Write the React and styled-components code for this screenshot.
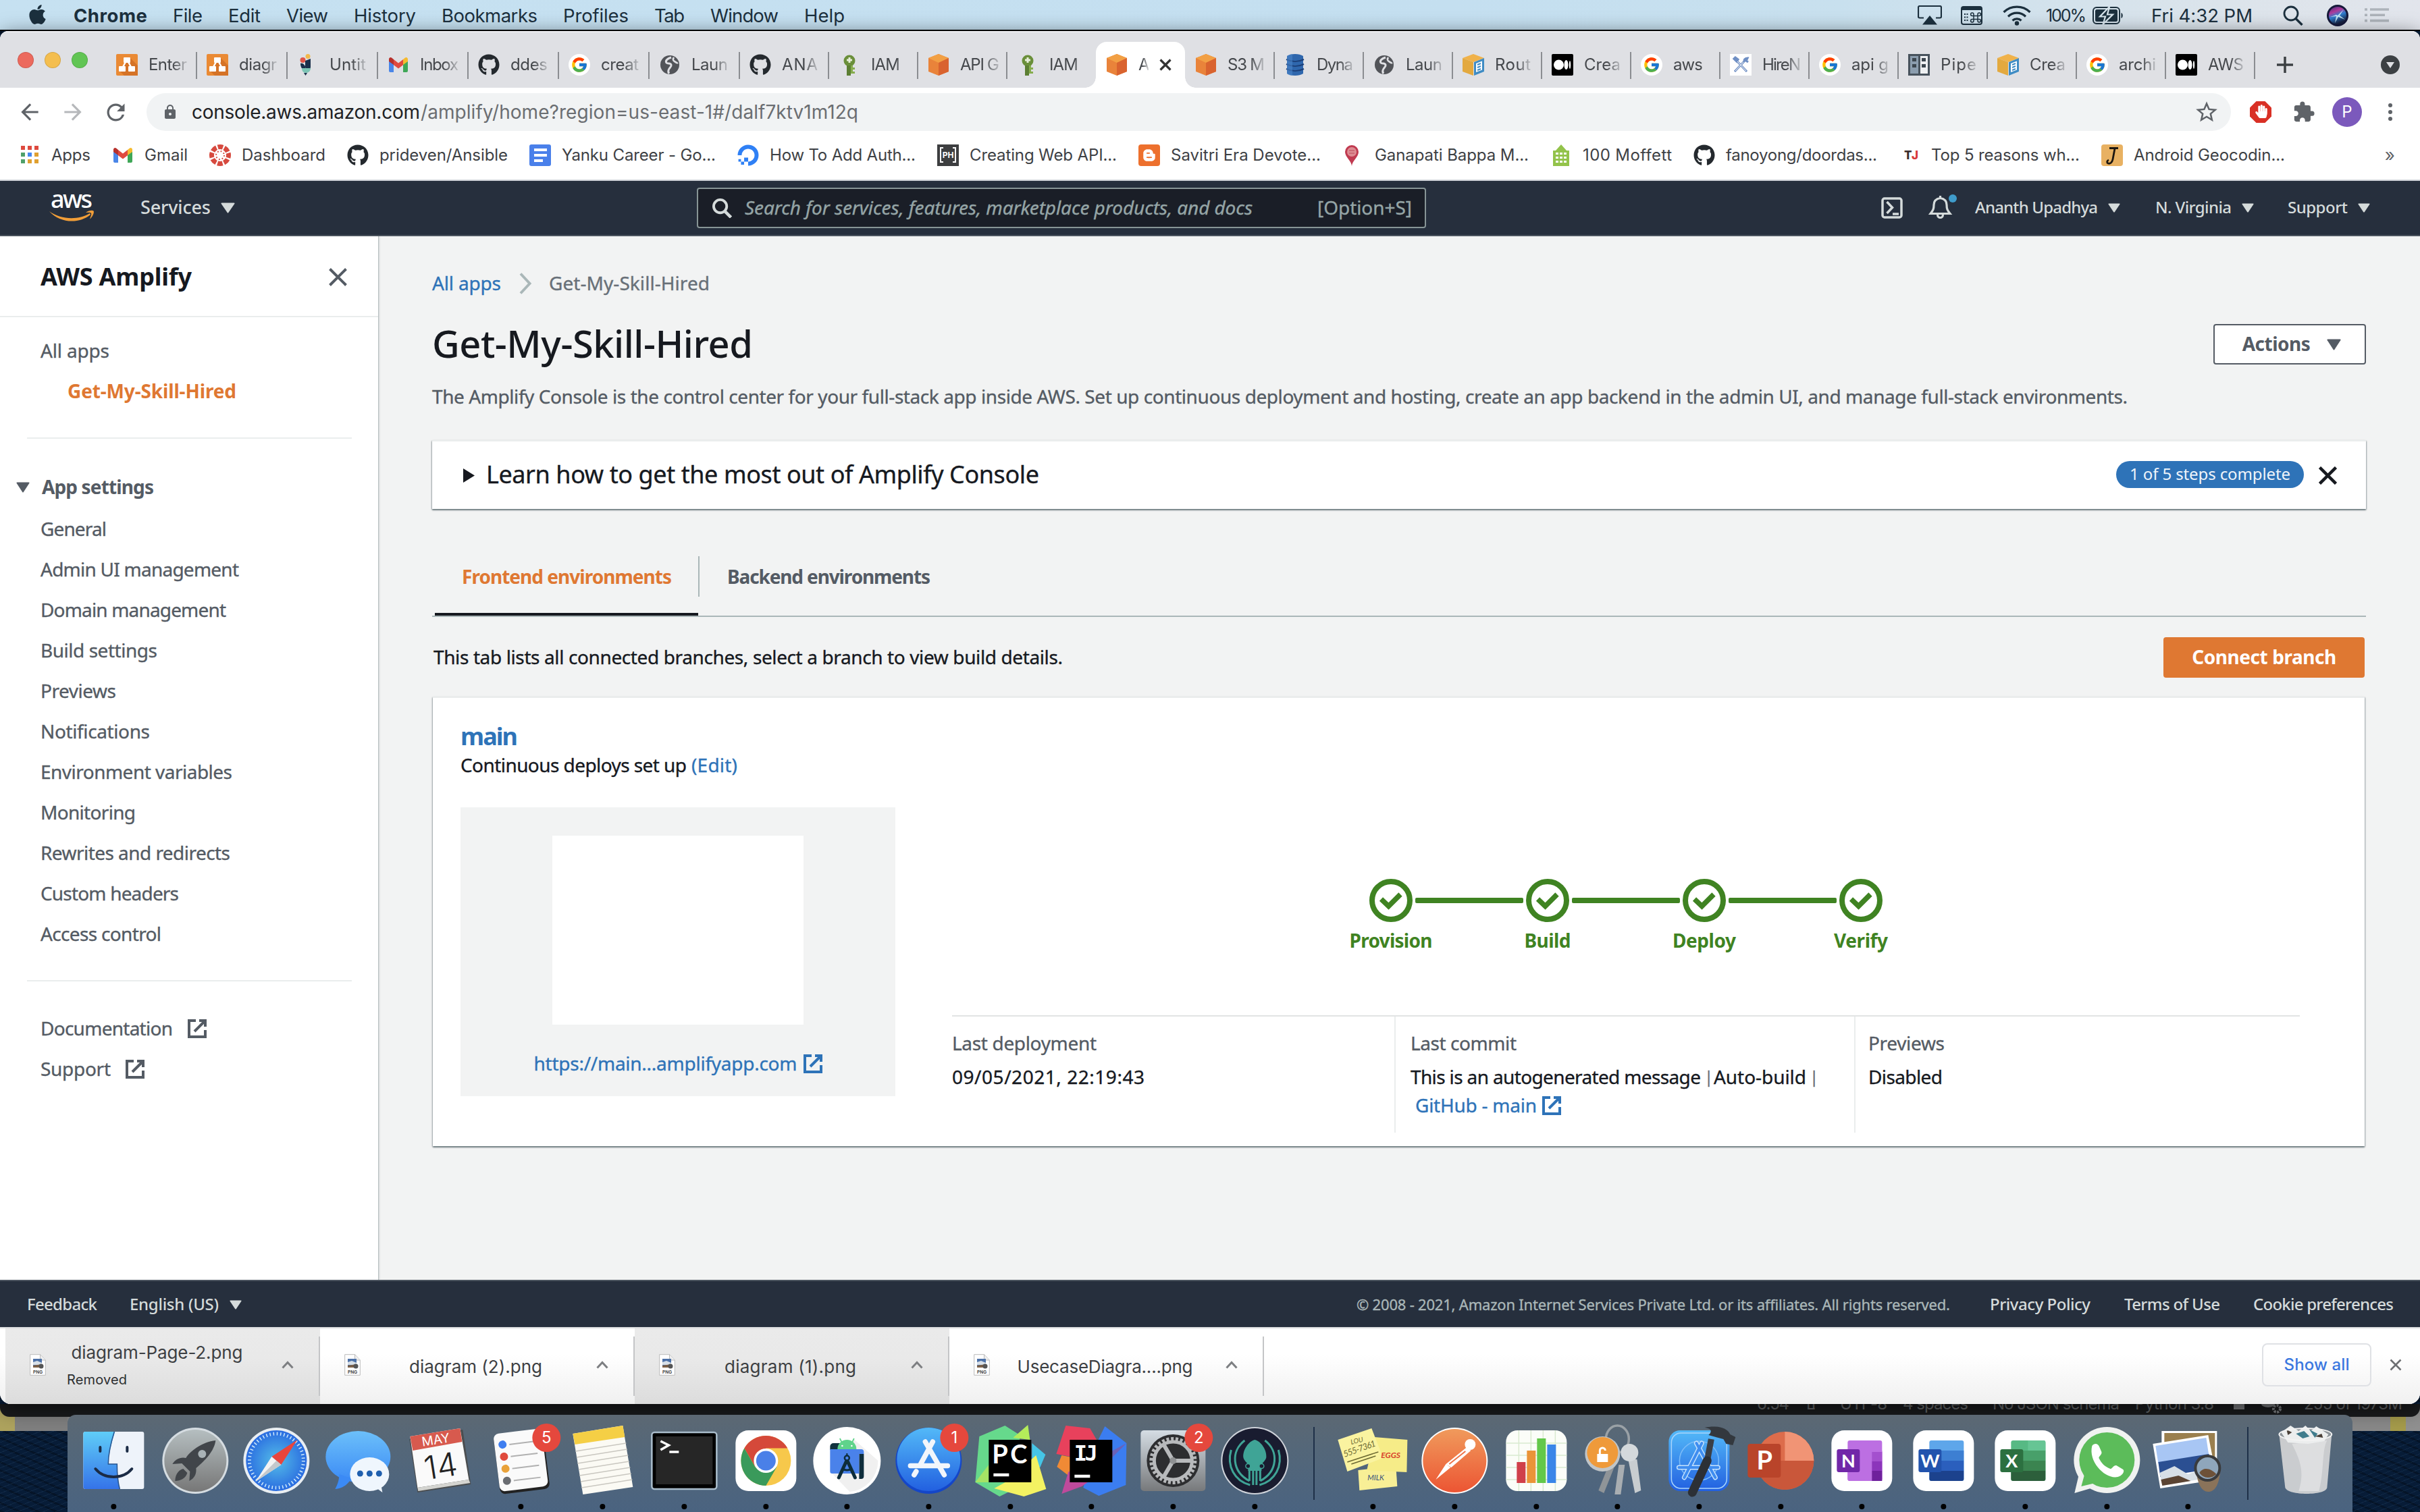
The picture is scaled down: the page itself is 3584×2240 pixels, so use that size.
import React, { useLayoutEffect, useRef } from "react";
import styled, { createGlobalStyle, css } from "styled-components";
import { FaApple, FaGithub, FaDigitalOcean, FaBloggerB, FaHandPaper } from "react-icons/fa";
import { FcGoogle } from "react-icons/fc";
import { MdExtension, MdStarBorder, MdLock, MdRefresh, MdArrowBack, MdArrowForward } from "react-icons/md";

const ember = `"Noto Sans", "Open Sans", sans-serif`;
const system = `Inter, Roboto, sans-serif`;

const GlobalStyle = createGlobalStyle`
  * { box-sizing: border-box; }
  html, body { margin: 0; padding: 0; }
  body { width: 3584px; height: 2240px; overflow: hidden; background: #06192f; font-family: ${ember}; }
  svg { display: block; flex: none; }
`;

/* ---------- text ---------- */

const Label = styled.span`
  display: inline-block;
  flex: none;
  white-space: pre;
  font-family: ${(p) => (p.$ui ? system : ember)};
  font-size: ${(p) => p.$size || 28}px;
  font-weight: ${(p) => p.$weight || 400};
  font-style: ${(p) => (p.$italic ? "italic" : "normal")};
  color: ${(p) => p.$color || "inherit"};
  line-height: ${(p) => p.$line || 40}px;
  margin-bottom: ${(p) => (p.$ui ? 0 : 2)}px;
  -webkit-text-stroke: ${(p) => (p.$ui || p.$weight || p.$thin ? 0 : 0.35)}px currentColor;
`;

/* Spreads its letters so that the run takes exactly w pixels. */
function Text({ w, children, ui, size, weight, italic, color, line, thin }) {
  const ref = useRef(null);
  useLayoutEffect(() => {
    const el = ref.current;
    if (!w) return;
    el.style.letterSpacing = "0px";
    el.style.width = "auto";
    const natural = el.getBoundingClientRect().width;
    const count = el.textContent.length;
    el.style.letterSpacing = `${(w - natural) / Math.max(1, count - 1)}px`;
    el.style.width = `${w}px`;
  }, [w, children]);
  return (
    <Label ref={ref} $ui={ui} $size={size} $weight={weight} $italic={italic} $color={color} $line={line} $thin={thin}>
      {children}
    </Label>
  );
}

/* ---------- desktop ---------- */

const Desktop = styled.div`
  position: relative;
  width: 3584px;
  height: 2240px;
  overflow: hidden;
  display: flex;
  flex-direction: column;
  background:
    repeating-linear-gradient(158deg, rgba(70, 110, 150, 0.16) 0 1px, transparent 1px 7px),
    repeating-linear-gradient(24deg, rgba(0, 0, 0, 0.28) 0 3px, transparent 3px 11px),
    #071c37;
`;

const MenuBar = styled.header`
  height: 46px;
  flex: none;
  display: flex;
  align-items: center;
  padding: 1px 46px 0 42px;
  border-bottom: 2px solid #000;
  background: linear-gradient(90deg, #c6e1f1 0, #c4dff0 60%, #c8e0ee 76%, #dce4eb 92%, #e2e5ec 100%);
  color: #1c303e;
`;
const AppleMark = styled(FaApple)`
  margin: 0 -4px 3px -3px;
`;
const MenuItems = styled.nav`
  display: flex;
  gap: 38px;
  margin-left: 41px;
`;
const MenuStatus = styled.div`
  display: flex;
  align-items: center;
  margin-left: auto;
`;
const Gap = styled.i`
  flex: none;
  width: ${(p) => p.$w}px;
`;

const BrowserWindow = styled.div`
  height: 2034px;
  flex: none;
  display: flex;
  flex-direction: column;
  overflow: hidden;
  border-radius: 12px 12px 16px 16px;
  background: #fff;
  position: relative;
  z-index: 1;
  box-shadow: 0 6px 30px rgba(0, 0, 0, 0.6);
`;

/* ---------- tab strip ---------- */

const TabStrip = styled.div`
  height: 84px;
  flex: none;
  display: flex;
  background: #dfe0e4;
  border-top: 2px solid #ededf0;
  padding-top: 14px;
`;
const TrafficLights = styled.div`
  display: flex;
  gap: 16px;
  width: 157px;
  padding: 15px 0 0 26px;
`;
const Light = styled.i`
  width: 24px;
  height: 24px;
  border-radius: 50%;
  background: ${(p) => p.$c};
  border: 1px solid rgba(0, 0, 0, 0.12);
`;
const Tab = styled.div`
  width: ${(p) => p.$w}px;
  height: 68px;
  flex: none;
  display: flex;
  align-items: center;
  gap: 16px;
  padding-left: 15px;
  position: relative;
  color: #45484c;
  ${(p) =>
    p.$active
      ? css`
          background: #fff;
          border-radius: 16px 16px 0 0;
          &::before,
          &::after {
            content: "";
            position: absolute;
            bottom: 0;
            width: 16px;
            height: 16px;
          }
          &::before {
            left: -16px;
            background: radial-gradient(circle at 0 0, transparent 15.5px, #fff 16px);
          }
          &::after {
            right: -16px;
            background: radial-gradient(circle at 100% 0, transparent 15.5px, #fff 16px);
          }
        `
      : ""}
`;
const TabTitle = styled.span`
  flex: none;
  mask-image: linear-gradient(90deg, #000 0, #000 ${(p) => p.$fade}%, rgba(0, 0, 0, 0.2) 100%);
`;
const TabDivider = styled.i`
  position: absolute;
  right: -1px;
  top: 15px;
  width: 2px;
  height: 40px;
  background: #8b8d91;
`;
const StripEnd = styled.div`
  display: flex;
  flex: 1;
  align-items: center;
  justify-content: space-between;
  padding: 0 30px 0 32px;
`;

/* ---------- toolbar ---------- */

const Toolbar = styled.div`
  height: 72px;
  flex: none;
  display: flex;
  align-items: center;
  padding: 0 28px 0 25px;
  color: #5f6368;
`;
const Omnibox = styled.div`
  width: 3087px;
  height: 56px;
  border-radius: 28px;
  background: #f1f3f4;
  display: flex;
  align-items: center;
  padding: 0 17px 0 23px;
  margin-left: 26px;
`;
const Push = styled.i`
  margin-left: auto;
`;
const Avatar = styled.span`
  width: 44px;
  height: 44px;
  border-radius: 50%;
  background: #7b59bc;
  display: flex;
  align-items: center;
  justify-content: center;
`;
const Bookmarks = styled.div`
  height: 66px;
  flex: none;
  display: flex;
  align-items: flex-start;
  gap: 32px;
  padding: 8px 37px 0 28px;
  border-bottom: 2px solid #cfd2d8;
  color: #3e4145;
`;
const Bookmark = styled.a`
  display: flex;
  align-items: center;
  gap: 16px;
  height: 40px;
`;

/* ---------- AWS navigation ---------- */

const AwsNav = styled.div`
  height: 82px;
  flex: none;
  display: flex;
  align-items: center;
  padding: 0 74px 0 73px;
  background: #262f3d;
  border-bottom: 2px solid #4b545f;
  color: #d5dbdb;
`;
const AwsLogo = styled.div`
  display: flex;
  flex-direction: column;
  align-items: center;
  width: 66px;
`;
const SearchBox = styled.div`
  width: 1080px;
  height: 60px;
  margin-left: 684px;
  display: flex;
  align-items: center;
  border: 2px solid #879596;
  border-radius: 4px;
  background: #1a1e27;
  color: #95a5a6;
  padding: 0 19px 0 21px;
`;
const NavRight = styled.div`
  display: flex;
  align-items: center;
  margin-left: auto;
`;
const NavMenu = styled.span`
  display: flex;
  align-items: center;
  gap: ${(p) => p.$gap || 15}px;
`;

/* ---------- console ---------- */

const Console = styled.div`
  height: 1546px;
  flex: none;
  display: flex;
  background: #f2f3f3;
`;
const Sidebar = styled.aside`
  width: 561px;
  flex: none;
  background: #fff;
  border-right: 1px solid #b9c0c1;
  box-shadow: 1px 0 2px rgba(0, 28, 36, 0.15);
  color: #545b64;
`;
const SidebarHead = styled.div`
  height: 120px;
  display: flex;
  align-items: center;
  justify-content: space-between;
  padding: 3px 46px 0 60px;
  border-bottom: 2px solid #eaeded;
`;
const NavRow = styled.div`
  height: 60px;
  display: flex;
  align-items: center;
  gap: ${(p) => p.$gap || 22}px;
  padding-left: ${(p) => p.$indent || 60}px;
`;
const NavList = styled.div`
  padding-top: ${(p) => p.$top}px;
`;
const Rule = styled.hr`
  border: 0;
  height: 2px;
  margin: 38px 39px 0 40px;
  background: #eaeded;
`;

const Main = styled.main`
  flex: 1;
  padding: 50px 80px 0 79px;
  color: #16191f;
`;
const Crumbs = styled.div`
  display: flex;
  align-items: center;
  height: 40px;
`;
const TitleRow = styled.div`
  display: flex;
  align-items: center;
  justify-content: space-between;
  height: 72px;
  margin: 34px 0 22px;
`;
const Title = styled.h1`
  margin: 0 0 2px;
  height: 72px;
`;
const OutlineButton = styled.button`
  width: 226px;
  height: 60px;
  display: flex;
  align-items: center;
  justify-content: center;
  gap: 24px;
  padding: 0 0 0 5px;
  border: 2px solid #545b64;
  border-radius: 4px;
  background: #fff;
  color: #545b64;
`;
const panel = css`
  background: #fff;
  box-shadow:
    0 2px 2px 0 rgba(0, 28, 36, 0.4),
    1px 1px 2px 0 rgba(0, 28, 36, 0.22),
    -1px 1px 2px 0 rgba(0, 28, 36, 0.22);
  border-top: 2px solid #eaeded;
`;
const LearnPanel = styled.section`
  ${panel}
  height: 102px;
  margin-top: 44px;
  display: flex;
  align-items: center;
  padding: 0 43px 0 45px;
`;
const Badge = styled.span`
  width: 278px;
  height: 40px;
  border-radius: 20px;
  background: #2e73b8;
  display: flex;
  align-items: center;
  justify-content: center;
  margin: 0 0 3px auto;
`;
const Tabs = styled.div`
  height: 102px;
  margin-top: 58px;
  display: flex;
  border-bottom: 2px solid #aab7b8;
`;
const EnvTab = styled.div`
  height: 100px;
  padding: 22px ${(p) => p.$right || 0}px 0 ${(p) => p.$left}px;
  margin-left: ${(p) => p.$offset || 0}px;
  border-bottom: ${(p) => (p.$active ? "4px solid #16191f" : "0")};
`;
const TabSplit = styled.i`
  width: 2px;
  height: 60px;
  margin-top: 12px;
  background: #aab7b8;
`;
const ListHead = styled.div`
  display: flex;
  align-items: center;
  justify-content: space-between;
  height: 60px;
  margin: 30px 2px 28px;
`;
const PrimaryButton = styled.button`
  width: 298px;
  height: 60px;
  display: flex;
  align-items: center;
  justify-content: center;
  border: 0;
  border-radius: 4px;
  background: #df7832;
  padding: 0;
`;
const BranchCard = styled.section`
  ${panel}
  height: 666px;
  margin: 0 2px 0 1px;
  padding: 38px 0 0 41px;
`;
const Line = styled.div`
  height: 40px;
  display: flex;
  align-items: center;
  gap: ${(p) => p.$gap || 0}px;
  margin-top: ${(p) => p.$top || 0}px;
  padding-left: ${(p) => p.$indent || 0}px;
`;
const CardBody = styled.div`
  display: flex;
  gap: 84px;
  margin-top: 42px;
`;
const Preview = styled.div`
  width: 644px;
  height: 428px;
  padding-top: 42px;
  display: flex;
  flex-direction: column;
  align-items: center;
  background: #f2f3f3;
`;
const Shot = styled.div`
  width: 372px;
  height: 280px;
  background: #fff;
`;
const Details = styled.div`
  width: 1996px;
  padding-top: 106px;
`;
const Pipeline = styled.div`
  display: flex;
  align-items: center;
  justify-content: center;
`;
const Connector = styled.i`
  width: 160px;
  height: 8px;
  margin: 0 4px;
  border-radius: 2px;
  background: #3f8322;
`;
const StepLabels = styled.div`
  display: grid;
  grid-template-columns: repeat(4, 232px);
  grid-auto-rows: 40px;
  justify-content: center;
  justify-items: center;
  margin-top: 7px;
`;
const Facts = styled.div`
  display: grid;
  grid-template-columns: 655px 681px 1fr;
  height: 174px;
  margin-top: 91px;
  border-top: 2px solid #e1e4e4;
`;
const Fact = styled.div`
  padding: 20px 0 0 ${(p) => p.$left || 0}px;
  border-left: ${(p) => (p.$left ? "2px solid #eaeded" : "0")};
`;

/* ---------- footer and downloads ---------- */

const Footer = styled.footer`
  height: 70px;
  flex: none;
  display: flex;
  align-items: center;
  padding: 2px 39px 0 40px;
  background: #262f3d;
  border-top: 2px solid #4b545f;
  color: #d5dbdb;
`;
const Downloads = styled.div`
  height: 114px;
  flex: none;
  display: flex;
  border-top: 2px solid #dcdddf;
  padding-left: 8px;
  background: linear-gradient(180deg, #fff 0, #fff 35%, #f0f0f0 100%);
`;
const Download = styled.div`
  width: 466px;
  height: 112px;
  flex: none;
  display: flex;
  align-items: center;
  padding: 0 39px 4px 36px;
  position: relative;
  background: ${(p) => (p.$dim ? "linear-gradient(180deg, #eaeaea 0, #e9e9e9 40%, #dcdcdc 100%)" : "none")};
  &::after {
    content: "";
    position: absolute;
    right: 0;
    top: 12px;
    width: 2px;
    height: 88px;
    background: #c4c5c7;
  }
`;
const DownloadName = styled.div`
  flex: 1;
  display: flex;
  flex-direction: column;
  color: #3d4043;
  align-items: center;
  padding: ${(p) => (p.$note ? "3px 20px 0 0" : "6px 8px 0 0")};
`;
const RemovedNote = styled.div`
  align-self: flex-start;
  padding-left: 31px;
  color: #2d2f31;
`;
const DownloadActions = styled.div`
  display: flex;
  align-items: center;
  gap: 27px;
  margin-left: auto;
  padding: 0 27px 4px 0;
`;
const ShowAll = styled.button`
  width: 162px;
  height: 64px;
  padding: 0;
  border: 2px solid #dfe1e5;
  border-radius: 8px;
  background: transparent;
`;

/* ---------- background editor, dock ---------- */

const Behind = styled.div`
  flex: none;
  height: 40px;
  background: linear-gradient(90deg, #aea35e 0 22px, #7f7f7f 22px 100px, #888 100px 3540px, #a59b4b 3540px 3563px, #909090 3563px);
`;
const EditorBar = styled.div`
  height: 19px;
  overflow: hidden;
  border-radius: 0 0 14px 14px;
  background: #1a1b1d;
  color: #66686a;
  display: flex;
  justify-content: flex-end;
  padding-right: 26px;
`;
const EditorText = styled.div`
  display: flex;
  align-items: center;
  height: 40px;
  margin-top: -20px;
`;
const Dock = styled.div`
  position: absolute;
  z-index: 2;
  left: 100px;
  bottom: 0;
  width: 3384px;
  height: 144px;
  display: flex;
  padding-left: 8px;
  border-radius: 12px 12px 0 0;
  background: linear-gradient(180deg, #5c6873 0, #546779 35%, #4a6380 100%);
`;
const DockItem = styled.svg`
  width: 120.7px;
  height: 144px;
  overflow: visible;
`;
const DockSplit = styled.i`
  flex: none;
  width: 2px;
  height: 108px;
  margin: 18px ${(p) => p.$right || 26}px 0 27px;
  background: #1e3048;
`;

/* ---------- small icons ---------- */

const Caret = ({ s = 18, c = "#d5dbdb", h = 14 }) => (
  <svg width={s} height={h} viewBox="0 0 20 16" preserveAspectRatio="none">
    <path d="M1.5 .5h17a1 1 0 0 1 .8 1.5L10.8 15a1 1 0 0 1-1.6 0L.7 2A1 1 0 0 1 1.5 .5z" fill={c} />
  </svg>
);
const Cross = ({ s = 26, c = "#545b64", t = 4 }) => (
  <svg width={s} height={s} viewBox={`0 0 ${s} ${s}`}>
    <path d={`M1.5 1.5L${s - 1.5} ${s - 1.5}M${s - 1.5} 1.5L1.5 ${s - 1.5}`} stroke={c} strokeWidth={t} />
  </svg>
);
const External = ({ c = "#545b64" }) => (
  <svg width="28" height="28" viewBox="0 0 28 28" fill="none" stroke={c} strokeWidth="4">
    <path d="M12 2H2v24h24V16M17 2h9v9M26 2L10 18" />
  </svg>
);
const Github = () => <FaGithub size={32} color="#24292e" />;
const Ocean = () => <FaDigitalOcean size={32} color="#2f80f5" />;
const Google = () => (
  <svg width="32" height="32" viewBox="0 0 32 32">
    <circle cx="16" cy="16" r="16" fill="#fff" />
    <FcGoogle x="3" y="3" size={26} />
  </svg>
);
const Gmail = () => (
  <svg width="32" height="32" viewBox="0 0 32 32">
    <path d="M2 8v17a2 2 0 0 0 2 2h5V13z" fill="#4a86e8" />
    <path d="M30 8v17a2 2 0 0 1-2 2h-5V13z" fill="#3fa757" />
    <path d="M23 8l3-2.400a2.500 2.500 0 0 1 4 2V11l-7 5z" fill="#f6bb2f" />
    <path d="M9 8L6 5.600a2.500 2.500 0 0 0-4 2V11l7 5z" fill="#b7312c" />
    <path d="M9 8l7 5.500L23 8v8.200l-7 5.300-7-5.300z" fill="#e04a3f" />
  </svg>
);
const Drawio = () => (
  <svg width="32" height="32" viewBox="0 0 32 32">
    <rect width="32" height="32" rx="2" fill="#ea8a34" />
    <path d="M20 5l12 12v15H12L6 26z" fill="#d57327" />
    <path d="M16 8L8 23M16 8l8 15" stroke="#fff" strokeWidth="2.500" />
    <rect x="11" y="5" width="10" height="8" rx="1" fill="#fff" />
    <rect x="4" y="18" width="10" height="8" rx="1" fill="#fff" />
    <rect x="18" y="18" width="10" height="8" rx="1" fill="#fff" />
  </svg>
);
const Notebook = () => (
  <svg width="32" height="32" viewBox="0 0 32 32">
    <circle cx="16" cy="3.500" r="3.500" fill="#f2b84b" />
    <circle cx="8.500" cy="9" r="4" fill="#e05548" />
    <path d="M12 10l8-3v12a4 4 0 0 1-8 0zM5 14c2-1 5 0 7 4v6c-4 0-7-4-7-10z" fill="#1b2f4b" />
    <path d="M7 21h13c0 4-3 7-7 7s-6-3-6-7z" fill="#7cc4b4" />
    <path d="M10 28h5l-2.500 4z" fill="#1b2f4b" />
  </svg>
);
const Globe = () => (
  <svg width="32" height="32" viewBox="0 0 32 32">
    <circle cx="16" cy="16" r="14" fill="#525459" />
    <path d="M18 5c-6 2-9 5-7 8 2 2 6 0 7 3 1 3-3 4-4 8-.5 2 0 4 1 5" fill="none" stroke="#dfe0e4" strokeWidth="3" />
    <path d="M22 5c-2 3-1 5 1 6s3 3 5 2" fill="none" stroke="#dfe0e4" strokeWidth="2.600" />
  </svg>
);
const Key = () => (
  <svg width="32" height="32" viewBox="0 0 32 32">
    <circle cx="16" cy="10" r="8.500" fill="#6a8f3a" />
    <path d="M12 17h6v15h-6z" fill="#5c7f33" />
    <path d="M18 17h3v3h3v3h-3v3h3v3h-6z" fill="#86ad4e" />
    <path d="M12 9h8M16 5v8" stroke="#e6eed8" strokeWidth="3" />
  </svg>
);
const Cube = () => (
  <svg width="32" height="32" viewBox="0 0 32 32">
    <path d="M16 0l15 6v20l-15 6L1 26V6z" fill="#e9833a" />
    <path d="M16 0l15 6-15 7L1 6z" fill="#f2a044" />
    <path d="M16 13l15-7v20l-15 6z" fill="#d9632f" />
  </svg>
);
const Dynamo = () => (
  <svg width="32" height="32" viewBox="0 0 32 32">
    <path d="M4 3c6-4 18-4 24 0v26c-6 4-18 4-24 0z" fill="#2f67ad" />
    <path d="M3 8c8 4 18 4 26 0M3 15c8 4 18 4 26 0M3 22c8 4 18 4 26 0" stroke="#1b3f78" strokeWidth="2" fill="none" />
    <path d="M4 3c3-2 6-3 8-3v32c-3 0-6-1-8-3z" fill="#4a84c8" opacity=".6" />
  </svg>
);
const RouteCube = () => (
  <svg width="32" height="32" viewBox="0 0 32 32">
    <path d="M0 6l16-6 16 6-16 6z" fill="#f0b24a" />
    <path d="M0 6l16 6v20L0 26z" fill="#e3a93f" />
    <path d="M17 12l15-6v20l-15 6z" fill="#3f8cc4" />
    <path d="M20 14l9-3.500v13L20 27z" fill="#fff" />
    <path d="M22 16l5-2M22 20l5-2M22 24l5-2" stroke="#3f8cc4" strokeWidth="2" />
  </svg>
);
const Medium = () => (
  <svg width="32" height="32" viewBox="0 0 32 32">
    <rect width="32" height="32" rx="2" fill="#000" />
    <circle cx="10.500" cy="16" r="7.500" fill="#fff" />
    <ellipse cx="21.500" cy="16" rx="3" ry="7" fill="#fff" />
    <ellipse cx="27" cy="16" rx="1.200" ry="6" fill="#fff" />
  </svg>
);
const Tools = () => (
  <svg width="32" height="32" viewBox="0 0 32 32">
    <rect width="32" height="32" fill="#fff" />
    <path d="M9 9l16 17M7 26l14-15M22 12c-2-3 0-6 4-6l-2 4 3 2M6 7l4 4 2-3-4-3z" stroke="#6f8fc4" strokeWidth="3.200" fill="none" />
    <path d="M11 11l13 14M8 25l12-13" stroke="#fff" strokeWidth="1" />
  </svg>
);
const Building2 = () => (
  <svg width="32" height="32" viewBox="0 0 32 32">
    <rect width="32" height="32" fill="#47525c" />
    <rect x="3" y="3" width="12" height="26" fill="#8b9dae" />
    <rect x="18" y="3" width="11" height="26" fill="#eef0f2" />
    <path d="M6 6h6v5H6zM6 15h6v5H6zM20 6h6v5h-6zM20 15h6v5h-6z" fill="#3c464f" />
  </svg>
);
const AppsGrid = () => (
  <svg width="32" height="32" viewBox="0 0 32 32">
    {["#de4a3e", "#de4a3e", "#de4a3e", "#4fa06a", "#4688f1", "#e0a030", "#4fa06a", "#e0a030", "#e0a030"].map((c, i) => (
      <rect key={i} x={3 + (i % 3) * 10} y={2 + Math.floor(i / 3) * 10} width="6" height="6" fill={c} />
    ))}
  </svg>
);
const Canvas = () => (
  <svg width="32" height="32" viewBox="0 0 32 32">
    <circle cx="16" cy="16" r="12.500" fill="none" stroke="#d64a3f" strokeWidth="7" strokeDasharray="7.600 2.217" strokeDashoffset="3.800" />
    <circle cx="16" cy="16" r="6" fill="none" stroke="#d64a3f" strokeWidth="2" strokeDasharray="1.800 2.900" />
  </svg>
);
const Docs = () => (
  <svg width="32" height="32" viewBox="0 0 32 32">
    <rect width="32" height="32" rx="3" fill="#4a80ea" />
    <path d="M7 8h19M7 16h19M7 24h13" stroke="#fff" strokeWidth="4" />
  </svg>
);
const PH = () => (
  <svg width="32" height="32" viewBox="0 0 32 32">
    <rect width="32" height="32" fill="#3d3e40" />
    <path d="M9 5H5v21h4M23 5h4v21h-4" stroke="#fff" strokeWidth="2" fill="none" />
    <text x="16" y="20" textAnchor="middle" fontFamily="Inter, sans-serif" fontSize="12" fontWeight="700" fill="#fff">PH</text>
  </svg>
);
const Blogger = () => (
  <svg width="32" height="32" viewBox="0 0 32 32">
    <rect width="32" height="32" rx="4" fill="#ed702d" />
    <FaBloggerB x="6" y="6" size={20} color="#fff" />
  </svg>
);
const Pin = () => (
  <svg width="32" height="32" viewBox="0 0 32 32">
    <path d="M14 32c-.5-8-10-13-10-21a10 10 0 0 1 20 0c0 8-9.500 13-10 21z" fill="#c03a50" />
    <circle cx="14" cy="11" r="7" fill="#dd8c93" />
    <path d="M10 9h8M10 13h8" stroke="#c6606c" strokeWidth="1.500" />
  </svg>
);
const Building = () => (
  <svg width="32" height="32" viewBox="0 0 32 32">
    <path d="M4 9h4l8-9 8 9h4v23H4z" fill="#93c34b" />
    <path d="M8 12h4v3H8zM14 12h4v3h-4zM20 12h4v3h-4zM8 18h4v3H8zM14 18h4v3h-4zM20 18h4v3h-4zM8 24h4v3H8zM14 24h4v3h-4zM20 24h4v3h-4z" fill="#fff" />
  </svg>
);
const TJ = () => (
  <svg width="32" height="32" viewBox="0 0 32 32">
    <text x="8" y="22" fontFamily="Inter, sans-serif" fontSize="17" fontWeight="800" fill="#3a2c2c">T</text>
    <text x="19" y="22" fontFamily="Inter, sans-serif" fontSize="17" fontWeight="800" fill="#d8373a">J</text>
  </svg>
);
const JIcon = () => (
  <svg width="32" height="32" viewBox="0 0 32 32">
    <rect width="32" height="32" rx="4" fill="#e8b162" />
    <path d="M12 5.500h13M20 6l-3 16c-1 5-4 7-7 6-2-1-2-4 1-5" stroke="#1d1710" strokeWidth="2.800" fill="none" />
  </svg>
);
const FileIcon = () => (
  <svg width="24" height="32" viewBox="0 0 24 32">
    <path d="M.7 .7h15L23.300 9v22.300H.7z" fill="#fff" stroke="#bbb" />
    <path d="M15.500 .7V9h7.800" fill="#eee" stroke="#bbb" />
    <rect x="5" y="7" width="13" height="13" fill="#4c71a8" />
    <path d="M5 12l6-2 7 3v3H5z" fill="#d6dfe8" />
    <path d="M5 17l13-2v5H5z" fill="#7a5f46" />
    <circle cx="17" cy="18" r="3.500" fill="#555" />
    <text x="12" y="28.500" textAnchor="middle" fontFamily="Inter, sans-serif" fontSize="6.500" fontWeight="600" fill="#333">PNG</text>
  </svg>
);
const UpCaret = () => (
  <svg width="18" height="12" viewBox="0 0 18 12">
    <path d="M1.500 10.500L9 2.500l7.500 8" stroke="#7d7f82" strokeWidth="3" fill="none" />
  </svg>
);

/* ---------- status icons ---------- */

const AirPlay = () => (
  <svg width="36" height="29" viewBox="0 0 36 29">
    <path d="M9 18.500H3a2 2 0 0 1-2-2V3a2 2 0 0 1 2-2h30a2 2 0 0 1 2 2v13.500a2 2 0 0 1-2 2h-6" stroke="#1c303e" strokeWidth="2.200" fill="none" />
    <path d="M18 15l11 13.500H7z" fill="#1c303e" />
  </svg>
);
const CommandPad = () => (
  <svg width="32" height="28" viewBox="0 0 32 28">
    <rect x="1" y="1" width="30" height="26" rx="3" fill="none" stroke="#1c303e" strokeWidth="2" />
    <rect x="1" y="1" width="30" height="5" fill="#1c303e" />
    <path d="M5 12h6M5 16.500h6M5 21h6" stroke="#1c303e" strokeWidth="1.800" strokeDasharray="2 1.500" />
    <path d="M19 14.500h6v5h-6zM19 14.500v-2.200a2.200 2.200 0 1 0-2.200 2.200zM25 14.500v-2.200a2.200 2.200 0 1 1 2.200 2.200zM19 19.500v2.200a2.200 2.200 0 1 1-2.200-2.200zM25 19.500v2.200a2.200 2.200 0 1 0 2.200-2.200z" fill="none" stroke="#1c303e" strokeWidth="1.500" />
  </svg>
);
const Wifi = () => (
  <svg width="42" height="30" viewBox="0 0 42 30" fill="none" stroke="#1c303e" strokeWidth="3.200">
    <path d="M1.500 10a28 28 0 0 1 39 0M8 16.500a18.500 18.500 0 0 1 26 0M14.500 22.500a9.500 9.500 0 0 1 13 0" />
    <circle cx="21" cy="26.500" r="1.600" fill="#1c303e" />
  </svg>
);
const Battery = () => (
  <svg width="46" height="26" viewBox="0 0 46 26">
    <rect x="1" y="1" width="39" height="24" rx="5" fill="none" stroke="#1c303e" strokeWidth="2" />
    <rect x="4" y="4" width="33" height="18" rx="2.500" fill="#1c303e" />
    <path d="M42.500 9c3 1 3 7 0 8z" fill="#1c303e" />
    <path d="M25 0L11 14.500h8L15.500 26 30 11.500h-8z" fill="#1c303e" stroke="#d8e5ed" strokeWidth="2.200" />
  </svg>
);
const Glass = ({ s = 30, c = "#1c303e", t = 2.8 }) => (
  <svg width={s} height={s} viewBox="0 0 30 30" fill="none" stroke={c} strokeWidth={t}>
    <circle cx="12" cy="12" r="10" />
    <path d="M19 19.500l9.500 9.500" strokeWidth={t * 1.2} />
  </svg>
);
const Siri = () => (
  <svg width="32" height="32" viewBox="0 0 32 32">
    <defs>
      <linearGradient id="siri" x1="0" y1="0" x2=".4" y2="1">
        <stop offset="0" stopColor="#3a2a78" />
        <stop offset=".35" stopColor="#b03a9a" />
        <stop offset=".6" stopColor="#2f7fd0" />
        <stop offset="1" stopColor="#16203f" />
      </linearGradient>
    </defs>
    <circle cx="16" cy="16" r="16" fill="#15193a" />
    <circle cx="16" cy="16" r="13" fill="url(#siri)" />
    <path d="M6 10l10 6 9-9-6 9 8 6-10-4-5 9 2-10-9 1 9-3z" fill="#d6f4fb" opacity=".85" />
  </svg>
);
const ListMenu = () => (
  <svg width="36" height="21" viewBox="0 0 36 21" stroke="#adb3ba" strokeWidth="3.600">
    <path d="M0 2h4M8 2h28M0 10.300h4M8 10.300h22M0 18.600h4M8 18.600h28" />
  </svg>
);

/* ---------- dock artwork: origin at the centre of each icon ---------- */

const Note = ({ x, y, n }) => (
  <g>
    <circle cx={x} cy={y} r="21" fill="#e5483d" />
    <text x={x} y={y + 8} textAnchor="middle" fontFamily="Inter, sans-serif" fontSize="24" fill="#fff">{n}</text>
  </g>
);
const OfficeTile = ({ letter, dark, shades }) => (
  <g>
    <rect x="-45" y="-45" width="90" height="90" rx="19" fill="#fff" />
    <rect x="-21" y="-30" width="51" height="60" rx="3" fill={shades[0]} />
    <path d="M-21 -15h51v15h-51z" fill={shades[1]} />
    <path d="M-21 0h51v15h-51z" fill={shades[2]} />
    <path d="M-21 15h51v12a3 3 0 0 1-3 3h-45a3 3 0 0 1-3-3z" fill={shades[3]} />
    <rect x="-37" y="-17" width="34" height="34" rx="3" fill={dark} />
    <text x="-20" y="9.500" textAnchor="middle" fontFamily="Lato, sans-serif" fontSize="27" fontWeight="700" fill="#fff">{letter}</text>
  </g>
);

const art = {
  finder: (
    <g>
      <rect x="-45" y="-43" width="90" height="85" rx="3" fill="#eef3fa" />
      <path d="M-42 -43H2C-4 -24 -8 -6 -8 5H5c0 14 1 26 4 37h-51a3 3 0 0 1-3-3v-79a3 3 0 0 1 3-3z" fill="url(#finderBlue)" />
      <path d="M1 -43C-5 -24 -8 -6 -8 5H5c0 14 1 26 4 37" stroke="#27548f" strokeWidth="1.500" fill="none" />
      <path d="M-27 12C-14 28 14 28 27 12" stroke="#1b2b45" strokeWidth="4" fill="none" strokeLinecap="round" />
      <path d="M-20 -20v6M20 -20v6" stroke="#1b2b45" strokeWidth="4" strokeLinecap="round" />
    </g>
  ),
  launchpad: (
    <g>
      <circle r="49" fill="#d5dce1" />
      <circle r="46" fill="url(#steel)" />
      <path d="M30 -30C10 -28 -8 -14 -14 -4c-8 -2 -16 2 -20 9l14 -1 12 12 -1 14c8 -4 11 -11 10 -19C14 0 28 -14 30 -30z" fill="#41454a" />
      <circle cx="10" cy="-10" r="6" fill="#a9b2b6" />
      <path d="M-18 12c-8 2 -12 10 -12 18 8 0 16 -4 18 -12z" fill="#41454a" />
    </g>
  ),
  safari: (
    <g>
      <circle r="49" fill="#e9eef2" />
      <circle r="45" fill="url(#safariBlue)" />
      <circle r="40" fill="none" stroke="#cfeafc" strokeWidth="5" strokeDasharray="1.500 3.740" />
      <path d="M31 -31L7 6 -7 -6z" fill="#e8453c" />
      <path d="M-31 31L7 6 -7 -6z" fill="#f3f3f3" />
      <path d="M-31 31L7 6 0 0z" fill="#c3c8cc" />
    </g>
  ),
  messages: (
    <g>
      <ellipse cy="-6" rx="48" ry="38" fill="url(#bubble)" />
      <path d="M-28 20c0 10 -3 16 -6 22 12 -1 20 -8 24 -16z" fill="#3b8af5" />
      <ellipse cx="17" cy="20" rx="29" ry="25" fill="#eff6fd" />
      <path d="M24 38l12 9 -3 -16z" fill="#eff6fd" />
      <circle cx="3" cy="19" r="4.500" fill="#1f5fae" />
      <circle cx="17" cy="19" r="4.500" fill="#1f5fae" />
      <circle cx="31" cy="19" r="4.500" fill="#1f5fae" />
    </g>
  ),
  calendar: (
    <g>
      <path d="M-45 -32L34 -46 46 35 -33 47z" fill="#4b4e50" />
      <path d="M-44 -36L30 -48 43 28 -33 40z" fill="#fafafa" />
      <path d="M-44 -36L30 -48 33 -28 -40 -15z" fill="#d75a4e" />
      <path d="M-33 40L43 28 45 33 -32 45z" fill="#d4d4d0" />
      <g transform="rotate(-9)" fontFamily="Inter, sans-serif" textAnchor="middle">
        <text x="-1" y="-25" fontSize="19" fill="#fff">MAY</text>
        <text x="0" y="25" fontSize="48" fontWeight="300" fill="#222">14</text>
      </g>
    </g>
  ),
  reminders: (
    <g>
      <g transform="rotate(-7)">
        <rect x="-36" y="-42" width="74" height="88" rx="8" fill="#222" />
        <rect x="-36" y="-44" width="72" height="86" rx="8" fill="#fafafa" />
        <path d="M-14 -26h40M-14 -8h40M-14 10h40M-14 28h40" stroke="#b0b0b0" strokeWidth="2" />
        <circle cx="-24" cy="-27" r="6" fill="#3f7ef0" />
        <circle cx="-24" cy="-9" r="6" fill="#e04a3c" />
        <circle cx="-24" cy="9" r="6" fill="#e9a23a" />
        <circle cx="-24" cy="27" r="6" fill="#6a6d72" />
      </g>
      <Note x={38} y={-34} n="5" />
    </g>
  ),
  notes: (
    <g>
      <path d="M-44 -40L30 -52 45 39 -29 50z" fill="#fbfaf4" />
      <path d="M-44 -40L30 -52 33 -35 -41 -24z" fill="#f5cf45" />
      <path d="M-40 -14L35 -26M-38.500 -5L36.500 -17M-37 4L38 -8M-35.500 13L39.500 1M-34 22L41 10M-32.500 31L42.500 19M-31 40L44 28" stroke="#c9c7c0" strokeWidth="1.500" />
    </g>
  ),
  terminal: (
    <g>
      <rect x="-48" y="-42" width="96" height="84" rx="4" fill="#000" stroke="#a9bccb" strokeWidth="2.500" />
      <rect x="-42" y="-36" width="84" height="71" fill="#262626" />
      <path d="M-35 -29l12 6 -12 7" stroke="#fff" strokeWidth="3.500" fill="none" />
      <path d="M-22 -13h14" stroke="#fff" strokeWidth="3.500" />
    </g>
  ),
  chrome: (
    <g>
      <rect x="-45" y="-45" width="90" height="90" rx="19" fill="#fff" />
      <circle r="37" fill="#f7c84b" />
      <path d="M-32 -18.500A37 37 0 0 1 32 -18.500L0 -18.500 -16 9z" fill="#d5493a" />
      <path d="M-32 -18.500A37 37 0 0 0 0 37L16 9.200 -16 9.200z" fill="#3a9a5b" />
      <circle r="18" fill="#fff" />
      <circle r="14.500" fill="#4a80e8" />
    </g>
  ),
  android: (
    <g>
      <circle r="50" fill="#fff" />
      <path d="M10 -32L46 0a46 46 0 0 1 -42 46L-22 19z" fill="#f0f0f0" />
      <path d="M-25 -16v-5a5 5 0 0 1 5 -5h12v10z" fill="#12323e" />
      <path d="M-14 -17a14 14 0 0 1 28 0z" fill="#5fd38b" />
      <path d="M-8 -28l-2.500 -5M8 -28l2.500 -5" stroke="#5fd38b" strokeWidth="1.800" />
      <circle cx="-7" cy="-22" r="1.300" fill="#fff" />
      <circle cx="7" cy="-22" r="1.300" fill="#fff" />
      <path d="M18 -10h7v33a4 4 0 0 1 -4 4h-3z" fill="#0e2d3b" />
      <path d="M-25 -17H21a4 4 0 0 1 4 4v3h-7v29H-22a3 3 0 0 1 -3 -3z" fill="#4a82ea" />
      <path d="M-1 1L-12 25M1 1L12 25" stroke="#0e2d3b" strokeWidth="5" fill="none" strokeLinecap="round" />
      <path d="M-7 12q7 4 14 0" stroke="#0e2d3b" strokeWidth="3" fill="none" />
      <circle cy="-4" r="3.500" fill="#4a82ea" stroke="#0e2d3b" strokeWidth="2.500" />
      <path d="M0 -11v4" stroke="#0e2d3b" strokeWidth="2" />
    </g>
  ),
  appstore: (
    <g>
      <circle r="49" fill="#1446c8" />
      <circle cy="-2" r="47" fill="url(#storeBlue)" />
      <path d="M-5 -28L23 21M6 -28L-13 7M-27 7.500H28M-18.500 16l-3 5" stroke="#f2f6fb" strokeWidth="7.500" strokeLinecap="round" />
      <Note x={38} y={-34} n="1" />
    </g>
  ),
  pycharm: (
    <g>
      <path d="M-46 -36L-8 -52 14 -38 10 40 -16 53 -52 32z" fill="#66d98c" />
      <path d="M4 -34L26 -53 29 -31z" fill="#b4ec5a" />
      <path d="M32 -26L52 -9 44 10 32 4z" fill="#45c5e6" />
      <path d="M38 -8L53 42 20 53 -24 41 -4 30z" fill="#f3f262" />
      <path d="M-52 32L-32 6v26z" fill="#a5e365" />
      <rect x="-32" y="-31" width="63" height="63" fill="#000" />
      <text x="-1" y="4" textAnchor="middle" fontFamily="Lato, sans-serif" fontSize="38" fontWeight="700" fill="#fff" textLength="52">PC</text>
      <path d="M-25 21h23" stroke="#fff" strokeWidth="4.500" />
    </g>
  ),
  intellij: (
    <g>
      <path d="M-38 -52L-2 -48 14 -20 -20 -4 -52 -10z" fill="#e8415c" />
      <path d="M20 -51L52 -26 51 36 11 52 -12 40 0 -10z" fill="#3b7df0" />
      <path d="M52 -26L30 -4v-10z" fill="#6a62b8" />
      <path d="M-44 -8L-24 -4 -34 22 -51 9z" fill="#f08a35" />
      <path d="M-34 16L0 28 -14 38 -44 49z" fill="#bf4a9c" />
      <rect x="-32" y="-31" width="63" height="63" fill="#000" />
      <text x="-8" y="0" textAnchor="middle" fontFamily="DejaVu Sans Mono, monospace" fontSize="32" fontWeight="700" fill="#fff" textLength="35">IJ</text>
      <path d="M-25 23h23" stroke="#fff" strokeWidth="4.500" />
    </g>
  ),
  settings: (
    <g>
      <rect x="-48" y="-45" width="96" height="90" rx="5" fill="url(#panelGrey)" />
      <circle r="39" fill="#2d2e30" />
      <circle r="32" fill="none" stroke="#b5b7b9" strokeWidth="6" strokeDasharray="4 2.700" />
      <circle r="28" fill="none" stroke="#b8babc" strokeWidth="5" />
      <path d="M0 0L28 0M0 0L-14 -24M0 0L-14 24" stroke="#b8babc" strokeWidth="6" />
      <circle r="5" fill="#8f9193" />
      <Note x={38} y={-34} n="2" />
    </g>
  ),
  kraken: (
    <g>
      <circle r="50" fill="#cfd3da" />
      <circle r="48" fill="#191c30" />
      <path d="M0 -31C-9 -29 -18 -16 -17 -5C-16 0 -12 2 -10 6V15H10V6C12 2 16 0 17 -5C18 -16 9 -29 0 -31z" fill="#3fa496" />
      <g fill="none" stroke="#3fa496" strokeWidth="3">
        <path d="M-2.500 14v22M2.500 14v22M-8 14v16M8 14v16" />
        <path d="M-15 -30C-36 -14 -34 16 -8 30M15 -30C36 -14 34 16 8 30" />
        <path d="M-35 -16C-42 8 -30 30 -7 36M35 -16C42 8 30 30 7 36" />
      </g>
      <circle cx="-10" cy="8" r="3.500" fill="#191c30" stroke="#3fa496" strokeWidth="1.500" />
      <circle cx="10" cy="8" r="3.500" fill="#191c30" stroke="#3fa496" strokeWidth="1.500" />
    </g>
  ),
  stickies: (
    <g>
      <path d="M-22 14L34 8 36 38 -20 44z" fill="#f8ef96" />
      <path d="M2 -35L51 -31 50 17 -9 14z" fill="#f6ec88" />
      <path d="M-52 -31L-2 -48 15 -4 -38 16z" fill="#faf3a0" />
      <g fontFamily="Lato, sans-serif" fontStyle="italic" fontWeight="400">
        <text x="-32" y="-24" fontSize="10" fill="#6d6a33" transform="rotate(-14 -32 -24)">LOU</text>
        <text x="-42" y="-5" fontSize="13" fill="#6d6a33" transform="rotate(-20 -42 -5)" textLength="50">555-7361</text>
        <text x="12" y="-4" fontSize="12" fontWeight="700" fill="#d8402c">EGGS</text>
        <text x="-8" y="29" fontSize="11" fill="#34507c">MILK</text>
      </g>
      <path d="M-38 2L8 -13M-32 5L4 -7" stroke="#6d6a33" strokeWidth="1.500" />
    </g>
  ),
  postman: (
    <g>
      <circle r="49" fill="#fff" />
      <circle r="47" fill="url(#postOrange)" />
      <circle cx="23" cy="-24" r="8" fill="#fff" />
      <path d="M18 -20L-13 5l8 5L24 -15zM-13 5L-28 28l22 -18z" fill="#fff" />
      <path d="M16 -14L-8 5" stroke="#ee7348" strokeWidth="2" />
    </g>
  ),
  numbers: (
    <g>
      <rect x="-45" y="-45" width="90" height="90" rx="17" fill="#fbfdf8" />
      <path d="M-45 -26h90M-45 -8h90M-45 10h90M-45 28h90M-26 -45v90M-8 -45v90M10 -45v90M28 -45v90" stroke="#d9ead0" strokeWidth="1.500" />
      <rect x="-29" y="2" width="13" height="31" fill="#d0404a" />
      <rect x="-14" y="-15" width="13" height="48" fill="#ea9438" />
      <rect x="1" y="-33" width="13" height="66" fill="#63c84a" />
      <rect x="16" y="-24" width="13" height="57" fill="#3a86e8" />
    </g>
  ),
  keychain: (
    <g fill="none">
      <ellipse cx="0" cy="-32" rx="17" ry="20" stroke="#9aa1a6" strokeWidth="3.500" />
      <path d="M-12 4L-28 44l8 4 16 -40z" fill="#8f9498" />
      <path d="M2 6l-6 44 9 0 6 -44z" fill="#a9aeb2" />
      <path d="M16 -2l10 50 9 -4 -6 -46z" fill="#c8cdd0" />
      <circle cx="18" cy="-12" r="13" fill="#d4d9dc" />
      <circle cx="-22" cy="-10" r="26" fill="#c0c5c8" />
      <circle cx="-22" cy="-12" r="23" fill="#ef9a3a" />
      <rect x="-30" y="-10" width="16" height="12" fill="#fff" />
      <path d="M-26 -10v-5a4 4 0 0 1 8 0" stroke="#fff" strokeWidth="3" />
    </g>
  ),
  xcode: (
    <g>
      <rect x="-45" y="-45" width="90" height="90" rx="17" fill="url(#storeBlue)" />
      <rect x="-41" y="-41" width="82" height="82" rx="14" fill="none" stroke="#a9d5fb" strokeWidth="1.500" />
      <circle r="29" fill="none" stroke="#7dbdf8" strokeWidth="1.500" />
      <g fill="none" strokeLinecap="round">
        <path d="M-4 -26L24 25M4 -26L-22 25M-30 10h58" stroke="#c5e2fd" strokeWidth="7" />
        <path d="M-4 -26L24 25M4 -26L-22 25M-30 10h58" stroke="#3f8df0" strokeWidth="4" />
      </g>
      <path d="M18 -32L12 0" stroke="#3a3f46" strokeWidth="9" />
      <path d="M12 0L-10 47" stroke="#2c3036" strokeWidth="13" strokeLinecap="round" />
      <path d="M8 -49c18 -4 34 0 38 10l8 4 -4 12 -10 -2 -4 -7 -22 -6c6 -6 4 -10 -6 -11z" fill="#33383e" />
    </g>
  ),
  powerpoint: (
    <g>
      <circle cx="6" r="43" fill="#dd6c4b" />
      <path d="M6 -43A43 43 0 0 1 49 0H6z" fill="#f19475" />
      <path d="M49 0A43 43 0 0 1 -37 0z" fill="#c9573a" />
      <rect x="-49" y="-25" width="49" height="50" rx="4" fill="#b9442a" />
      <text x="-24" y="13" textAnchor="middle" fontFamily="Lato, sans-serif" fontSize="38" fontWeight="700" fill="#fff">P</text>
    </g>
  ),
  onenote: (
    <g>
      <OfficeTile letter="N" dark="#7127a8" shades={["#bc6fe2", "#bc6fe2", "#bc6fe2", "#bc6fe2"]} />
      <path d="M15 -13h15v14h-15z" fill="#a450ce" />
      <path d="M15 1h15v14h-15z" fill="#8c35bb" />
      <path d="M15 15h15v15h-15z" fill="#6f219c" />
    </g>
  ),
  word: <OfficeTile letter="W" dark="#2253ad" shades={["#5ea6ea", "#3d7fd2", "#2b5fbd", "#1c428d"]} />,
  excel: (
    <g>
      <OfficeTile letter="X" dark="#2c7040" shades={["#57b984", "#48a06a", "#3b8450", "#2c5f3b"]} />
      <path d="M4 -30h23a3 3 0 0 1 3 3v12H4z" fill="#66c594" />
    </g>
  ),
  whatsapp: (
    <g>
      <circle cx="0" cy="-1" r="49" fill="#f0f2f0" />
      <path d="M-48 48l8 -34 26 24z" fill="#f0f2f0" />
      <circle cx="0" cy="-1" r="41" fill="#5cbc5a" />
      <path d="M-38 38l6 -22 15 17z" fill="#5cbc5a" />
      <path d="M-22 -22c4 -5 9 -3 11 2l3 7c1 4 -4 6 -4 9 4 8 9 13 17 16 3 0 5 -6 9 -5l10 6c3 3 -2 10 -8 11 -18 4 -44 -22 -38 -46z" fill="#fff" />
    </g>
  ),
  preview: (
    <g>
      <path d="M-39 -44h82v76h-82z" fill="#fff" />
      <path d="M-35 -41h75v70h-75z" fill="#9a7f4e" />
      <path d="M-52 -25L30 -38 43 28 -41 41z" fill="#fff" />
      <path d="M-48 -22L27 -34 31 -8 -44 4z" fill="#a8c6f4" />
      <path d="M-44 2L31 -10 35 12 -41 24z" fill="#2b4f92" />
      <path d="M-42 18L-20 8 0 20 36 8 38 24 -38 37z" fill="#d7dfe6" />
      <path d="M-40 28L-14 22 4 30 -38 37z" fill="#5b4433" />
      <path d="M12 14c2 20 8 32 18 32s16 -10 18 -32z" fill="#8a735a" />
      <circle cx="29" cy="11" r="20" fill="#3a3b3d" />
      <circle cx="29" cy="11" r="16" fill="#8fa6bb" />
      <path d="M17 18c6 -10 18 -6 25 2a16 16 0 0 1 -25 -2z" fill="#6d5138" />
    </g>
  ),
  trash: (
    <g>
      <path d="M-39 -40L39 -40 32 40c-2 12 -58 12 -62 0z" fill="#d3d4d5" opacity=".93" />
      <path d="M-20 -25c10 20 20 40 10 70h30c8 -30 4 -60 12 -75z" fill="#e6e6e7" opacity=".7" />
      <ellipse cy="-39" rx="39" ry="9" fill="#8d9499" />
      <path d="M-36 -42l14 -10 12 8 10 -8 8 8 8 -7 18 12 -6 10 -24 4 -30 -2z" fill="#eceeee" />
      <path d="M-14 -40l12 -4 8 8 -10 3zM6 -46l12 6 -4 6z" fill="#3f7c8c" />
      <path d="M14 -36l10 -4 2 6zM-28 -46l8 4 -6 4z" fill="#4a4038" />
      <ellipse cy="-39" rx="39" ry="9" fill="none" stroke="#f3f3f3" strokeWidth="2" />
    </g>
  ),
};

const Gradients = () => (
  <defs>
    <linearGradient id="finderBlue" x1="0" y1="0" x2="0" y2="1">
      <stop offset="0" stopColor="#5fcdf8" />
      <stop offset="1" stopColor="#3573e8" />
    </linearGradient>
    <linearGradient id="steel" x1="0" y1="0" x2="0" y2="1">
      <stop offset="0" stopColor="#b5bec0" />
      <stop offset="1" stopColor="#777" />
    </linearGradient>
    <radialGradient id="safariBlue">
      <stop offset="0" stopColor="#54bde8" />
      <stop offset="1" stopColor="#2a6ce0" />
    </radialGradient>
    <linearGradient id="bubble" x1="0" y1="0" x2="0" y2="1">
      <stop offset="0" stopColor="#6cc0fa" />
      <stop offset="1" stopColor="#3b8af5" />
    </linearGradient>
    <linearGradient id="storeBlue" x1="0" y1="0" x2="0" y2="1">
      <stop offset="0" stopColor="#53b9f8" />
      <stop offset="1" stopColor="#2260e0" />
    </linearGradient>
    <linearGradient id="panelGrey" x1="0" y1="0" x2="0" y2="1">
      <stop offset="0" stopColor="#d5dde4" />
      <stop offset="1" stopColor="#77797b" />
    </linearGradient>
    <linearGradient id="postOrange" x1="0" y1="0" x2="0" y2="1">
      <stop offset="0" stopColor="#f09a5c" />
      <stop offset="1" stopColor="#ec5533" />
    </linearGradient>
  </defs>
);

const leftDock = [
  ["finder", 1], ["launchpad", 0], ["safari", 0], ["messages", 0], ["calendar", 0],
  ["reminders", 1], ["notes", 1], ["terminal", 1], ["chrome", 1], ["android", 1],
  ["appstore", 1], ["pycharm", 1], ["intellij", 1], ["settings", 1], ["kraken", 1],
];
const rightDock = ["stickies", "postman", "numbers", "keychain", "xcode", "powerpoint", "onenote", "word", "excel", "whatsapp", "preview"];

const DockApp = ({ name, running }) => (
  <DockItem viewBox="-60 -68 120 144">
    {name === "finder" && <Gradients />}
    {art[name]}
    {running ? <circle cy="68" r="4" fill="#000" /> : null}
  </DockItem>
);

/* ---------- data ---------- */

const menus = [
  ["Chrome", 109], ["File", 44], ["Edit", 48], ["View", 62], ["History", 92], ["Bookmarks", 142],
  ["Profiles", 97], ["Tab", 45], ["Window", 101], ["Help", 60],
];
const tabs = [
  [Drawio, "Enter", 57], [Drawio, "diagr", 56], [Notebook, "Untit", 54], [Gmail, "Inbox", 57], [Github, "ddes", 55], [Google, "creat", 56],
  [Globe, "Laun", 54], [Github, "ANA", 53], [Key, "IAM", 43, 90], [Cube, "API G", 58], [Key, "IAM", 43, 90], [Cube, "A", 15, 40, true], [Cube, "S3 M", 55],
  [Dynamo, "Dyna", 54], [Globe, "Laun", 54], [RouteCube, "Rout", 53], [Medium, "Crea", 54], [Google, "aws", 44, 95], [Tools, "HireN", 57],
  [Google, "api g", 55], [Building2, "Pipe", 53], [RouteCube, "Crea", 53], [Google, "archi", 55], [Medium, "AWS", 53],
];
const bookmarks = [
  [AppsGrid, "Apps", 58], [Gmail, "Gmail", 64], [Canvas, "Dashboard", 124], [Github, "prideven/Ansible", 190],
  [Docs, "Yanku Career - Go...", 228], [Ocean, "How To Add Auth...", 216],
  [PH, "Creating Web API...", 218], [Blogger, "Savitri Era Devote...", 222], [Pin, "Ganapati Bappa M...", 228],
  [Building, "100 Moffett", 132], [Github, "fanoyong/doordas...", 224], [TJ, "Top 5 reasons wh...", 220], [JIcon, "Android Geocodin...", 224],
];
const settings = [
  ["General", 98], ["Admin UI management", 294], ["Domain management", 275], ["Build settings", 173], ["Previews", 112],
  ["Notifications", 162], ["Environment variables", 284], ["Monitoring", 141], ["Rewrites and redirects", 281],
  ["Custom headers", 205], ["Access control", 179],
];
const downloads = [
  ["diagram-Page-2.png", 254, true, true], ["diagram (2).png", 197, false, false],
  ["diagram (1).png", 195, true, false], ["UsecaseDiagra....png", 260, false, false],
];
const link = "#2e73b8";

const Check = () => (
  <svg width="64" height="64" viewBox="0 0 64 64" fill="none" stroke="#3f8322">
    <circle cx="32" cy="32" r="28" strokeWidth="8" />
    <path d="M17.500 30l11 10.500L46 23" strokeWidth="7.500" />
  </svg>
);

export default function App() {
  return (
    <Desktop>
      <GlobalStyle />
      <MenuBar>
        <AppleMark size={33} />
        <MenuItems>
          {menus.map(([t, w], i) => (
            <Text key={t} ui size={27.5} w={w} weight={i === 0 ? 700 : 400}>{t}</Text>
          ))}
        </MenuItems>
        <MenuStatus>
          <AirPlay />
          <Gap $w={28} />
          <CommandPad />
          <Gap $w={30} />
          <Wifi />
          <Gap $w={22} />
          <Text ui size={25} w={60}>100%</Text>
          <Gap $w={9} />
          <Battery />
          <Gap $w={41} />
          <Text ui size={27.5} w={150}>Fri 4:32 PM</Text>
          <Gap $w={45} />
          <Glass s={30} />
          <Gap $w={35} />
          <Siri />
          <Gap $w={24} />
          <ListMenu />
        </MenuStatus>
      </MenuBar>

      <BrowserWindow>
        <TabStrip>
          <TrafficLights>
            <Light $c="#ec6a5e" />
            <Light $c="#f4be4f" />
            <Light $c="#61c554" />
          </TrafficLights>
          {tabs.map(([Icon, title, w, fade, active], i) => (
            <Tab key={i} $w={i < 7 ? 134 : 132} $active={active}>
              <Icon />
              <TabTitle $fade={fade || 62}>
                <Text ui size={24} w={w}>{title}</Text>
              </TabTitle>
              {active && <Cross s={18} c="#333" t={3.2} />}
              {!active && !tabs[i + 1]?.[4] && <TabDivider />}
            </Tab>
          ))}
          <StripEnd>
            <svg width="26" height="26" viewBox="0 0 26 26" stroke="#3c4043" strokeWidth="3.500">
              <path d="M13 1v24M1 13h24" />
            </svg>
            <svg width="28" height="28" viewBox="0 0 28 28">
              <circle cx="14" cy="14" r="14" fill="#3c4043" />
              <path d="M8 10h12l-6 9z" fill="#dfe0e4" />
            </svg>
          </StripEnd>
        </TabStrip>

        <Toolbar>
          <MdArrowBack size={38} />
          <Gap $w={26} />
          <MdArrowForward size={38} color="#b6b8bb" />
          <Gap $w={25} />
          <MdRefresh size={39} />
          <Omnibox>
            <MdLock size={24} />
            <Gap $w={20} />
            <Text ui size={28} w={338} color="#202124">console.aws.amazon.com</Text>
            <Gap $w={1} />
            <Text ui size={28} w={648} color="#6b6e72">/amplify/home?region=us-east-1#/dalf7ktv1m12q</Text>
            <Push />
            <MdStarBorder size={38} />
          </Omnibox>
          <Gap $w={28} />
          <svg width="32" height="32" viewBox="0 0 32 32">
            <path d="M9.500 0h13L32 9.500v13L22.500 32h-13L0 22.500v-13z" fill="#d93025" />
            <FaHandPaper x="7" y="5" size={20} color="#fff" />
          </svg>
          <Gap $w={31} />
          <MdExtension size={34} />
          <Gap $w={25} />
          <Avatar>
            <Text ui size={24} color="#fff">P</Text>
          </Avatar>
          <Push />
          <svg width="32" height="28" viewBox="0 0 32 28" fill="#5f6368">
            <circle cx="16" cy="4" r="3" />
            <circle cx="16" cy="14" r="3" />
            <circle cx="16" cy="24" r="3" />
          </svg>
        </Toolbar>
        <Bookmarks>
          {bookmarks.map(([Icon, t, w]) => (
            <Bookmark key={t}>
              <Icon />
              <Text ui size={24} w={w}>{t}</Text>
            </Bookmark>
          ))}
          <Push />
          <Text ui size={26} color="#5f6368">»</Text>
        </Bookmarks>

        <AwsNav>
          <AwsLogo>
            <Text size={36} w={62} line={22} weight={500} color="#fff">aws</Text>
            <svg width="66" height="24" viewBox="0 0 66 24" fill="#f19e38">
              <path d="M0 5C18 17.500 42 18.500 60 8l1 2C44 24 16 23 0 5z" />
              <path d="M54 7c4-3.500 10-4 11.500-2.500S64.500 13 60 16.500c1.500-4 3-7.500 1.800-8.800S57 7 54 7z" />
            </svg>
          </AwsLogo>
          <Gap $w={69} />
          <NavMenu $gap={15}>
            <Text size={27} w={104} weight={500}>Services</Text>
            <Caret s={21} h={16} />
          </NavMenu>
          <SearchBox>
            <Glass s={29} c="#d5dbdb" t={4} />
            <Gap $w={19} />
            <Text size={28} w={752} italic>Search for services, features, marketplace products, and docs</Text>
            <Push />
            <Text size={28} w={140}>[Option+S]</Text>
          </SearchBox>
          <NavRight>
            <svg width="32" height="32" viewBox="0 0 32 32" fill="none" stroke="#d5dbdb" strokeWidth="3.500">
              <rect x="2" y="2" width="28" height="28" rx="3" />
              <path d="M8.500 7l8 8.500-8 8.500M17 25h9" />
            </svg>
            <Gap $w={38} />
            <svg width="42" height="42" viewBox="0 0 42 42" fill="none" stroke="#d5dbdb" strokeWidth="3.200">
              <path d="M3 29.500h29c-4-5-5-7-5-13 0-6-3-9-9.500-10C11 7.500 8 10.500 8 16.500c0 6-1 8-5 13zM13.500 31c0 6 8 6 8 0M17.500 3v4" />
              <circle cx="36" cy="7" r="6" fill="#3f9ccb" stroke="none" />
            </svg>
            <Gap $w={27} />
            <NavMenu>
              <Text size={24} w={182} weight={500}>Ananth Upadhya</Text>
              <Caret />
            </NavMenu>
            <Gap $w={52} />
            <NavMenu>
              <Text size={24} w={113} weight={500}>N. Virginia</Text>
              <Caret />
            </NavMenu>
            <Gap $w={50} />
            <NavMenu>
              <Text size={24} w={89} weight={500}>Support</Text>
              <Caret />
            </NavMenu>
          </NavRight>
        </AwsNav>

        <Console>
          <Sidebar>
            <SidebarHead>
              <Text size={36} weight={700} w={224} color="#16191f">AWS Amplify</Text>
              <Cross s={27} />
            </SidebarHead>
            <NavList $top={20}>
              <NavRow><Text w={102}>All apps</Text></NavRow>
              <NavRow $indent={100}><Text w={250} weight={700} color="#df7832">Get-My-Skill-Hired</Text></NavRow>
            </NavList>
            <Rule />
            <NavList $top={42}>
              <NavRow $indent={24} $gap={18}>
                <Caret s={20} h={16} c="#545b64" />
                <Text w={166} weight={700}>App settings</Text>
              </NavRow>
            </NavList>
            <NavList $top={2}>
              {settings.map(([t, w]) => (
                <NavRow key={t}><Text w={w}>{t}</Text></NavRow>
              ))}
            </NavList>
            <Rule />
            <NavList $top={40}>
              <NavRow><Text w={196}>Documentation</Text><External /></NavRow>
              <NavRow><Text w={104}>Support</Text><External /></NavRow>
            </NavList>
          </Sidebar>

          <Main>
            <Crumbs>
              <Text w={102} color={link}>All apps</Text>
              <Gap $w={26} />
              <svg width="20" height="32" viewBox="0 0 20 32">
                <path d="M3 1.500l13.500 14.500L3 30.500" stroke="#aab7b8" strokeWidth="4" fill="none" />
              </svg>
              <Gap $w={25} />
              <Text w={238} color="#687078">Get-My-Skill-Hired</Text>
            </Crumbs>
            <TitleRow>
              <Title><Text size={56} w={475} line={70} weight={500}>Get-My-Skill-Hired</Text></Title>
              <OutlineButton>
                <Text w={101} weight={700}>Actions</Text>
                <Caret s={21} h={17} c="#545b64" />
              </OutlineButton>
            </TitleRow>
            <Line>
              <Text w={2511} color="#545b64">The Amplify Console is the control center for your full-stack app inside AWS. Set up continuous deployment and hosting, create an app backend in the admin UI, and manage full-stack environments.</Text>
            </Line>
            <LearnPanel>
              <svg width="18" height="21" viewBox="0 0 18 21"><path d="M1 0l17 10.500L1 21z" fill="#16191f" /></svg>
              <Gap $w={17} />
              <Text size={36} w={819}>Learn how to get the most out of Amplify Console</Text>
              <Badge><Text thin size={24} w={238} color="#eef4fa">1 of 5 steps complete</Text></Badge>
              <Gap $w={22} />
              <Cross s={27} c="#16191f" t={4.5} />
            </LearnPanel>
            <Tabs>
              <EnvTab $active $offset={4} $left={40} $right={39}>
                <Text w={311} weight={700} color="#df7832">Frontend environments</Text>
              </EnvTab>
              <TabSplit />
              <EnvTab $left={41}>
                <Text w={301} weight={700} color="#545b64">Backend environments</Text>
              </EnvTab>
            </Tabs>
            <ListHead>
              <Text w={932}>This tab lists all connected branches, select a branch to view build details.</Text>
              <PrimaryButton><Text w={214} weight={700} color="#fff">Connect branch</Text></PrimaryButton>
            </ListHead>
            <BranchCard>
              <Line><Text size={36} w={85} weight={700} color={link}>main</Text></Line>
              <Line $top={2} $gap={7}>
                <Text w={335}>Continuous deploys set up</Text>
                <Text w={68} color={link}>(Edit)</Text>
              </Line>
              <CardBody>
                <Preview>
                  <Shot />
                  <Line $top={38} $gap={9}>
                    <Text w={390} color={link}>https://main...amplifyapp.com</Text>
                    <External c={link} />
                  </Line>
                </Preview>
                <Details>
                  <Pipeline>
                    <Check /><Connector /><Check /><Connector /><Check /><Connector /><Check />
                  </Pipeline>
                  <StepLabels>
                    <Text w={123} weight={700} color="#3f8322">Provision</Text>
                    <Text w={69} weight={700} color="#3f8322">Build</Text>
                    <Text w={94} weight={700} color="#3f8322">Deploy</Text>
                    <Text w={80} weight={700} color="#3f8322">Verify</Text>
                  </StepLabels>
                  <Facts>
                    <Fact>
                      <Line><Text w={214} color="#545b64">Last deployment</Text></Line>
                      <Line $top={10}><Text w={285}>09/05/2021, 22:19:43</Text></Line>
                    </Fact>
                    <Fact $left={22}>
                      <Line><Text w={157} color="#545b64">Last commit</Text></Line>
                      <Line $top={10} $gap={5}>
                        <Text w={430}>This is an autogenerated message</Text>
                        <Text size={24} w={9} color="#687078">|</Text>
                        <Text w={137}>Auto-build</Text>
                        <Text size={24} w={9} color="#687078">|</Text>
                      </Line>
                      <Line $top={2} $gap={8} $indent={7}>
                        <Text w={180} color={link}>GitHub - main</Text>
                        <External c={link} />
                      </Line>
                    </Fact>
                    <Fact $left={19}>
                      <Line><Text w={113} color="#545b64">Previews</Text></Line>
                      <Line $top={10}><Text w={110}>Disabled</Text></Line>
                    </Fact>
                  </Facts>
                </Details>
              </CardBody>
            </BranchCard>
          </Main>
        </Console>

        <Footer>
          <Text size={24} w={104} weight={500}>Feedback</Text>
          <Gap $w={48} />
          <NavMenu $gap={16}>
            <Text size={24} w={132} weight={500}>English (US)</Text>
            <Caret />
          </NavMenu>
          <Push />
          <Text size={22} w={879} color="#aab7b8">© 2008 - 2021, Amazon Internet Services Private Ltd. or its affiliates. All rights reserved.</Text>
          <Gap $w={59} />
          <Text size={24} w={149} weight={500}>Privacy Policy</Text>
          <Gap $w={50} />
          <Text size={24} w={142} weight={500}>Terms of Use</Text>
          <Gap $w={49} />
          <Text size={24} w={208} weight={500}>Cookie preferences</Text>
        </Footer>

        <Downloads>
          {downloads.map(([name, w, dim, note]) => (
            <Download key={name} $dim={dim}>
              <FileIcon />
              <DownloadName $note={note}>
                <Text ui size={26} w={w}>{name}</Text>
                {note && (
                  <RemovedNote><Text ui size={20} w={89}>Removed</Text></RemovedNote>
                )}
              </DownloadName>
              <UpCaret />
            </Download>
          ))}
          <DownloadActions>
            <ShowAll><Text ui size={24} w={97} weight={500} color="#3b78e0">Show all</Text></ShowAll>
            <Cross s={18} c="#6d6f72" t={2.6} />
          </DownloadActions>
        </Downloads>
      </BrowserWindow>

      <Behind>
        <EditorBar>
          <EditorText>
            <Text ui size={24} w={48}>6:54</Text>
            <Gap $w={25} />
            <Text ui size={24} w={22}>LF</Text>
            <Gap $w={28} />
            <Text ui size={24} w={70}>UTF-8</Text>
            <Gap $w={23} />
            <Text ui size={24} w={97}>4 spaces</Text>
            <Gap $w={36} />
            <Text ui size={24} w={188}>No JSON schema</Text>
            <Gap $w={23} />
            <Text ui size={24} w={117}>Python 3.8</Text>
            <Gap $w={29} />
            <svg width="104" height="40" viewBox="0 0 104 40" fill="#7c7e80">
              <rect x="0" y="18" width="16" height="10" />
              <ellipse cx="51" cy="20" rx="10" ry="5" />
              <circle cx="64" cy="27" r="5" fill="none" stroke="#7c7e80" strokeWidth="4" strokeDasharray="3 1.500" />
            </svg>
            <Text ui size={24} w={146}>255 of 1973M</Text>
          </EditorText>
        </EditorBar>
      </Behind>

      <Dock>
        {leftDock.map(([n, r]) => <DockApp key={n} name={n} running={r} />)}
        <DockSplit />
        {rightDock.map((n) => <DockApp key={n} name={n} running />)}
        <DockSplit $right={24} />
        <DockApp name="trash" />
      </Dock>
    </Desktop>
  );
}
